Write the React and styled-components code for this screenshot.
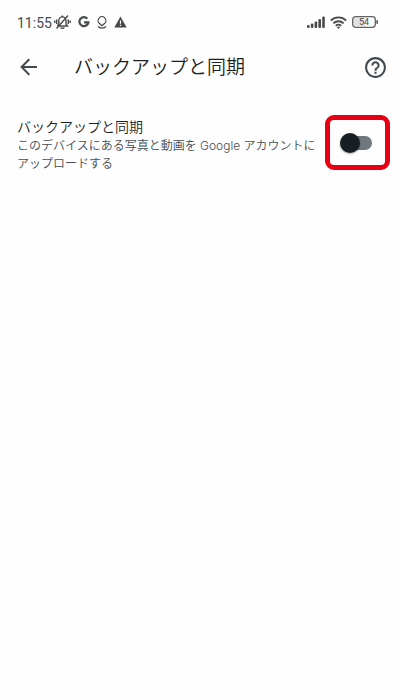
import React, { useState } from "react";
import styled, { createGlobalStyle } from "styled-components";

const GlobalStyle = createGlobalStyle`
  * {
    box-sizing: border-box;
  }
  body {
    margin: 0;
    background-color: #fefefe;
    color: #1b1f22;
    font-family: Roboto, "Noto Sans CJK JP", sans-serif;
  }
`;

const StatusBar = styled.div`
  display: flex;
  justify-content: space-between;
  align-items: center;
  height: 44px;
  padding: 0 21px 0 17px;
  color: #47494b;
`;

const StatusGroup = styled.div`
  display: flex;
  align-items: center;
  gap: ${(props) => props.$gap}px;

  svg {
    display: block;
    flex: none;
  }
`;

const Clock = styled.span`
  font-size: 14px;
  line-height: 16px;
  margin-top: 2px;
`;

const AppBar = styled.header`
  display: flex;
  align-items: center;
  height: 46px;
  padding: 0 12px 0 16px;
`;

const IconButton = styled.button`
  display: flex;
  justify-content: center;
  align-items: center;
  width: 26px;
  height: 26px;
  padding: 0;
  border: none;
  background: none;
  color: #42494f;
  cursor: pointer;
`;

const Title = styled.h1`
  flex: 1;
  margin: 0 0 0 32px;
  padding-top: 2px;
  font-size: 19px;
  line-height: 28px;
  font-weight: 350;
`;

const SettingRow = styled.section`
  display: flex;
  align-items: flex-start;
  gap: 4px;
  padding: 25px 10px 0 17px;
`;

const SettingText = styled.label`
  flex: 1;
  padding-top: 2px;
  font-weight: 350;
  cursor: pointer;
`;

const SettingName = styled.span`
  display: block;
  font-size: 14px;
  line-height: 20px;
`;

const SettingDetail = styled.span`
  display: block;
  color: #454c52;
  font-family: Inter, "Noto Sans CJK JP", sans-serif;
  font-size: 12px;
  line-height: 18px;
`;

const Highlight = styled.div`
  display: flex;
  flex: none;
  justify-content: center;
  align-items: center;
  width: 65px;
  height: 55px;
  border: 5px solid #e60012;
  border-radius: 9px;
`;

const Switch = styled.input`
  display: flex;
  align-items: center;
  appearance: none;
  width: 28px;
  height: 14px;
  margin: 0;
  border-radius: 7px;
  background-color: #70777e;
  cursor: pointer;

  &::before {
    content: "";
    flex: none;
    width: 20px;
    height: 20px;
    margin-left: -4px;
    border-radius: 50%;
    background-color: #181f23;
    box-shadow: 0 1px 2px rgba(0, 0, 0, 0.35);
  }
  &:checked {
    justify-content: flex-end;
  }
  &:checked::before {
    margin: 0 -4px 0 0;
  }
`;

const MutedBell = () => (
  <svg width="17" height="16" viewBox="0 0 17 16" fill="none" stroke="currentColor" strokeWidth="1.4">
    <path d="M4 12h9.500L12 10V6.500a3.600 3.600 0 0 0-7.200 0V10L3.500 12" />
    <path d="M6.500 13.500q2 1.500 4 0M2.500 14.500 14 1.500M8.400 3V1.500" />
    <path d="M2.700 5.500v4.500M.8 6.500v2.500M14.300 5.500v4.500M16.200 6.500v2.500" />
  </svg>
);

const GoogleMark = () => (
  <svg width="12" height="12" viewBox="0 0 12 12" fill="none" stroke="currentColor" strokeWidth="2.2">
    <path d="M9.300 2.700A4.500 4.500 0 1 0 10.400 6.300H6" />
  </svg>
);

const PinMark = () => (
  <svg width="10" height="13" viewBox="0 0 10 13" fill="none" stroke="currentColor" strokeWidth="1.2">
    <path d="M5 9.800 2.200 7.300a3.900 3.900 0 1 1 5.600 0Z" />
    <path d="M1 10.400q1 1.800 4 1.800t4-1.800" />
  </svg>
);

const WarningMark = () => (
  <svg width="13" height="12" viewBox="0 0 13 12">
    <path d="M6.500.5 12.700 11.500H.3Z" fill="currentColor" />
    <path d="M6.500 4.500v3.200M6.500 8.800v1.300" stroke="#fefefe" strokeWidth="1.2" />
  </svg>
);

const Signal = () => (
  <svg width="18" height="12" viewBox="0 0 18 12" fill="currentColor">
    <rect x="0" y="9" width="2.600" height="3" rx="1" />
    <rect x="3.800" y="7.500" width="2.600" height="4.500" rx="1" />
    <rect x="7.600" y="5.500" width="2.600" height="6.500" rx="1" />
    <rect x="11.400" y="3" width="2.600" height="9" rx="1" />
    <rect x="15.200" y="0.500" width="2.600" height="11.500" rx="1" />
  </svg>
);

const Wifi = () => (
  <svg width="17" height="13" viewBox="0 0 17 13" fill="none" stroke="currentColor" strokeWidth="1.9">
    <path d="M.9 4.500a10.800 10.800 0 0 1 15.200 0M3.400 7.300a7.200 7.200 0 0 1 10.200 0M5.800 9.800a3.800 3.800 0 0 1 5.400 0" />
    <path d="M6.800 11 8.500 12.900 10.200 11Q8.500 9.800 6.800 11Z" fill="currentColor" stroke="none" />
  </svg>
);

const Battery = () => (
  <svg width="27" height="12" viewBox="0 0 27 12">
    <rect x="1.500" y="1.500" width="12" height="9" rx="2" fill="#e2e2e2" />
    <rect x="0.700" y="0.700" width="22.600" height="10.600" rx="3" fill="none" stroke="#606265" strokeWidth="1.300" />
    <rect x="24.300" y="4" width="1.700" height="4" rx="0.800" fill="#606265" />
    <text x="12" y="9.200" textAnchor="middle" fontSize="9" fontFamily="Roboto, sans-serif" fill="currentColor">
      54
    </text>
  </svg>
);

const BackArrow = () => (
  <svg width="18" height="18" viewBox="0 0 18 18" fill="none" stroke="currentColor" strokeWidth="2">
    <path d="M17 9H2M9.300 1.300 1.600 9l7.700 7.700" />
  </svg>
);

const Help = () => (
  <svg width="25" height="25" viewBox="0 0 24 24" fill="currentColor">
    <path d="M11 18h2v-2h-2v2zm1-16C6.480 2 2 6.480 2 12s4.480 10 10 10 10-4.480 10-10S17.520 2 12 2zm0 18c-4.410 0-8-3.590-8-8s3.590-8 8-8 8 3.590 8 8-3.590 8-8 8zm0-14c-2.210 0-4 1.790-4 4h2c0-1.100.9-2 2-2s2 .9 2 2c0 2-3 1.750-3 5h2c0-2.250 3-2.500 3-5 0-2.210-1.790-4-4-4z" />
  </svg>
);

const App = () => {
  const [backup, setBackup] = useState(false);

  return (
    <>
      <GlobalStyle />
      <StatusBar>
        <StatusGroup $gap={7}>
          <StatusGroup $gap={2}>
            <Clock>11:55</Clock>
            <MutedBell />
          </StatusGroup>
          <GoogleMark />
          <PinMark />
          <WarningMark />
        </StatusGroup>
        <StatusGroup $gap={5}>
          <Signal />
          <Wifi />
          <Battery />
        </StatusGroup>
      </StatusBar>
      <AppBar>
        <IconButton type="button" aria-label="戻る">
          <BackArrow />
        </IconButton>
        <Title>バックアップと同期</Title>
        <IconButton type="button" aria-label="ヘルプ">
          <Help />
        </IconButton>
      </AppBar>
      <main>
        <SettingRow>
          <SettingText htmlFor="backup">
            <SettingName>バックアップと同期</SettingName>
            <SettingDetail>
              このデバイスにある写真と動画を Google アカウントにアップロードする
            </SettingDetail>
          </SettingText>
          <Highlight>
            <Switch
              id="backup"
              type="checkbox"
              role="switch"
              checked={backup}
              onChange={(e) => setBackup(e.target.checked)}
            />
          </Highlight>
        </SettingRow>
      </main>
    </>
  );
};

export default App;
